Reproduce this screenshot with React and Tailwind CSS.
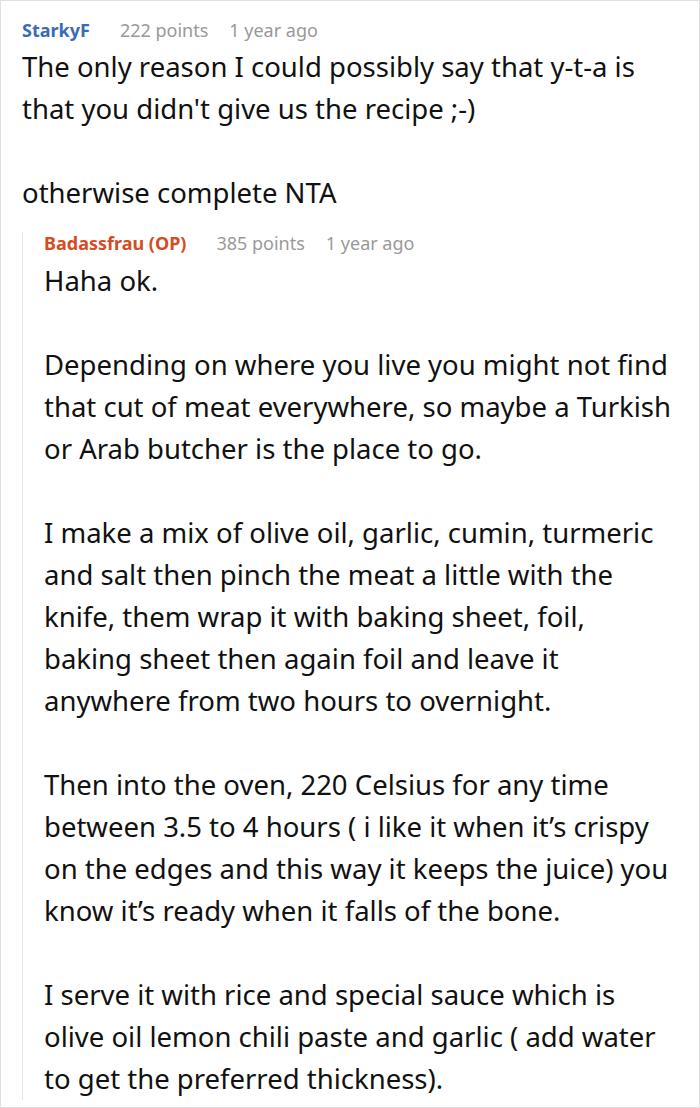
export default function App() {
  const paras = [
    "Haha ok.",
    "Depending on where you live you might not find that cut of meat everywhere, so maybe a Turkish or Arab butcher is the place to go.",
    "I make a mix of olive oil, garlic, cumin, turmeric and salt then pinch the meat a little with the knife, them wrap it with baking sheet, foil, baking sheet then again foil and leave it anywhere from two hours to overnight.",
    "Then into the oven, 220 Celsius for any time between 3.5 to 4 hours ( i like it when it\u2019s crispy on the edges and this way it keeps the juice) you know it\u2019s ready when it falls of the bone.",
    "I serve it with rice and special sauce which is olive oil lemon chili paste and garlic ( add water to get the preferred thickness).",
  ];
  return (
    <div className="w-[700px] h-[1108px] border border-[#e0e0e0] bg-white overflow-hidden" style={{ fontFamily: '"Noto Sans", sans-serif' }}>
      <div className="pl-[21px] pr-[21px] pt-[17px]">
        <div className="flex items-center text-[18px] leading-[24px]">
          <span className="font-bold text-[#3a6bb4]">StarkyF</span>
          <span className="ml-[30px] text-[#999]">222 points</span>
          <span className="ml-[21px] text-[#999]">1 year ago</span>
        </div>
        <div className="text-[27.5px] leading-[42px] text-[#111] mt-[4px]">
          <p>The only reason I could possibly say that y-t-a is that you didn't give us the recipe ;-)</p>
          <p className="mt-[42px]">otherwise complete NTA</p>
        </div>
        <div className="mt-[19px] border-l border-[#e6e6e6] pl-[21px]">
          <div className="flex items-center text-[18px] leading-[20px]">
            <span className="font-bold text-[#d44c1f]">Badassfrau (OP)</span>
            <span className="ml-[30px] text-[#999]">385 points</span>
            <span className="ml-[21px] text-[#999]">1 year ago</span>
          </div>
          <div className="text-[27.5px] leading-[42px] text-[#111] mt-[7px]">
            {paras.map((p, i) => (
              <p key={i} className={i ? "mt-[42px]" : ""}>{p}</p>
            ))}
          </div>
        </div>
      </div>
    </div>
  );
}
